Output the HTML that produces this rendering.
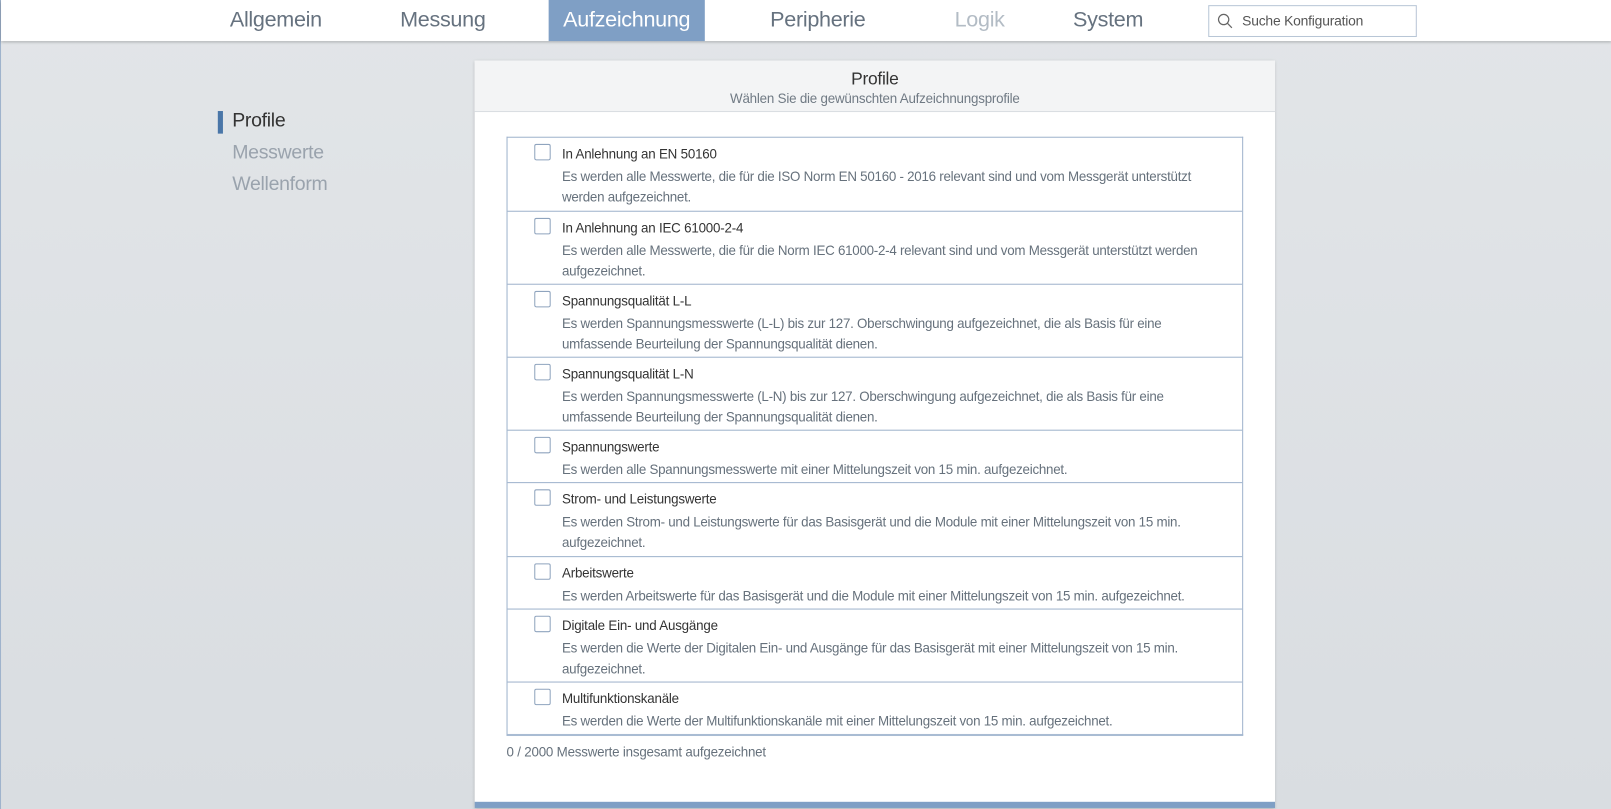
<!DOCTYPE html>
<html><head><meta charset="utf-8"><style>
*{margin:0;padding:0;box-sizing:border-box}
html,body{width:1611px;height:809px;overflow:hidden}
body{font-family:"Liberation Sans",sans-serif;background:linear-gradient(#e2e5e8,#d9dde1);position:relative}
#w{position:absolute;left:0;top:0;width:1568px;height:787px;transform:scale(1.02742,1.02795);transform-origin:0 0;border-left:1px solid #9fb3cc}
.nav{position:absolute;left:0;top:0;width:1568px;height:40px;background:#fff;box-shadow:0 1px 3px rgba(0,0,0,.35)}
.tab{position:absolute;top:0;height:40px;line-height:40px;font-size:21px;color:#66727f;text-align:center;letter-spacing:-0.3px}
.tab.act{background:#7f9fc5;color:#fff}
.search{position:absolute;left:1175px;top:5px;width:203px;height:31px;border:1px solid #b8c6d6;background:#fff;font-size:13.5px;color:#555;line-height:29px;padding-left:32px;letter-spacing:-0.2px}
.side{position:absolute;left:225px;font-size:19px;color:#9aa3ad;letter-spacing:-0.3px}
.panel{position:absolute;left:461px;top:59px;width:779px;height:727px;background:#fff;box-shadow:0 1px 3px rgba(0,0,0,.2);border-bottom:6px solid #7f9fc5}
.ph{height:50px;background:#f3f4f5;border-bottom:1px solid #d9dde1;text-align:center}
.ph .t{font-size:17px;color:#333;padding-top:8px;letter-spacing:-0.3px}
.ph .s{font-size:13px;color:#707a84;margin-top:1px;letter-spacing:-0.2px}
.tbl{position:absolute;left:31px;top:74px;width:717px;border:1px solid #9fb3cc;border-bottom:2px solid #a9bcd3}
.row{position:relative;border-top:1px solid #9fb3cc}
.row:first-child{border-top:none}
.cb{position:absolute;left:26px;top:6px;width:16px;height:16px;border:1px solid #8fa4be;border-radius:2px}
.rt{position:absolute;left:53px;top:8px;font-size:13px;color:#333;letter-spacing:-0.2px;white-space:nowrap}
.rd{position:absolute;left:53px;top:28px;font-size:13px;color:#66717c;line-height:19.5px;letter-spacing:-0.25px;white-space:nowrap}
.foot{position:absolute;left:31px;top:665px;font-size:13px;color:#66717c;letter-spacing:-0.2px}
</style></head><body><div id="w">
<div class="nav">
<div class="tab" style="left:205px;width:125px">Allgemein</div>
<div class="tab" style="left:370px;width:120px">Messung</div>
<div class="tab act" style="left:533px;width:152px">Aufzeichnung</div>
<div class="tab" style="left:735px;width:120px">Peripherie</div>
<div class="tab" style="left:910px;width:85px;color:#b3bcc5">Logik</div>
<div class="tab" style="left:1030px;width:95px">System</div>
<div class="search"><svg style="position:absolute;left:8px;top:7px" width="15" height="15" viewBox="0 0 15 15"><circle cx="6" cy="6" r="5" fill="none" stroke="#666" stroke-width="1.2"/><line x1="9.6" y1="9.6" x2="14" y2="14" stroke="#666" stroke-width="1.2"/></svg>Suche Konfiguration</div>
</div>
<div style="position:absolute;left:211px;top:108px;width:5px;height:22px;background:#4a76a8"></div>
<div class="side" style="top:107px;color:#333">Profile</div>
<div class="side" style="top:138px">Messwerte</div>
<div class="side" style="top:169px">Wellenform</div>
<div class="panel">
<div class="ph"><div class="t">Profile</div><div class="s">Wählen Sie die gewünschten Aufzeichnungsprofile</div></div>
<div class="tbl">
<div class="row" style="height:71px"><div class="cb"></div><div class="rt">In Anlehnung an EN 50160</div><div class="rd">Es werden alle Messwerte, die für die ISO Norm EN 50160 - 2016 relevant sind und vom Messgerät unterstützt<br>werden aufgezeichnet.</div></div>
<div class="row" style="height:71px"><div class="cb"></div><div class="rt">In Anlehnung an IEC 61000-2-4</div><div class="rd">Es werden alle Messwerte, die für die Norm IEC 61000-2-4 relevant sind und vom Messgerät unterstützt werden<br>aufgezeichnet.</div></div>
<div class="row" style="height:71px"><div class="cb"></div><div class="rt">Spannungsqualität L-L</div><div class="rd">Es werden Spannungsmesswerte (L-L) bis zur 127. Oberschwingung aufgezeichnet, die als Basis für eine<br>umfassende Beurteilung der Spannungsqualität dienen.</div></div>
<div class="row" style="height:71px"><div class="cb"></div><div class="rt">Spannungsqualität L-N</div><div class="rd">Es werden Spannungsmesswerte (L-N) bis zur 127. Oberschwingung aufgezeichnet, die als Basis für eine<br>umfassende Beurteilung der Spannungsqualität dienen.</div></div>
<div class="row" style="height:51px"><div class="cb"></div><div class="rt">Spannungswerte</div><div class="rd">Es werden alle Spannungsmesswerte mit einer Mittelungszeit von 15 min. aufgezeichnet.</div></div>
<div class="row" style="height:72px"><div class="cb"></div><div class="rt">Strom- und Leistungswerte</div><div class="rd">Es werden Strom- und Leistungswerte für das Basisgerät und die Module mit einer Mittelungszeit von 15 min.<br>aufgezeichnet.</div></div>
<div class="row" style="height:51px"><div class="cb"></div><div class="rt">Arbeitswerte</div><div class="rd">Es werden Arbeitswerte für das Basisgerät und die Module mit einer Mittelungszeit von 15 min. aufgezeichnet.</div></div>
<div class="row" style="height:71px"><div class="cb"></div><div class="rt">Digitale Ein- und Ausgänge</div><div class="rd">Es werden die Werte der Digitalen Ein- und Ausgänge für das Basisgerät mit einer Mittelungszeit von 15 min.<br>aufgezeichnet.</div></div>
<div class="row" style="height:51px"><div class="cb"></div><div class="rt">Multifunktionskanäle</div><div class="rd">Es werden die Werte der Multifunktionskanäle mit einer Mittelungszeit von 15 min. aufgezeichnet.</div></div>
</div>
<div class="foot">0 / 2000 Messwerte insgesamt aufgezeichnet</div>
</div>
</div></body></html>
